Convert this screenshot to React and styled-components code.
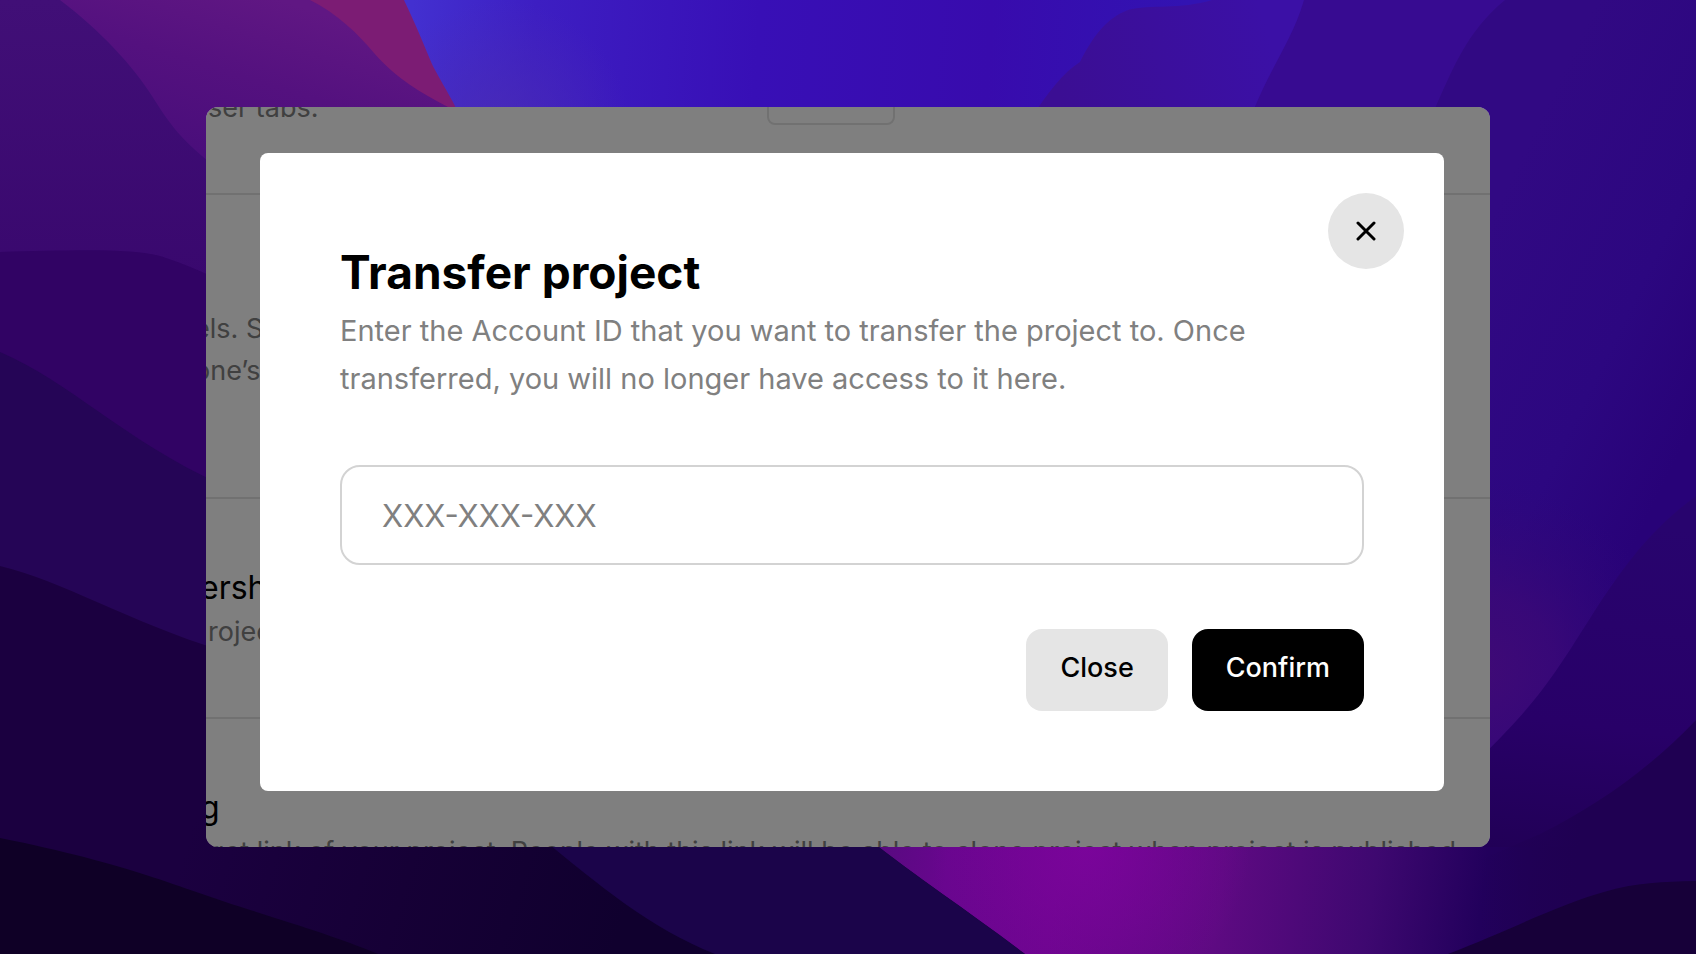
import React from "react";
import styled, { createGlobalStyle } from "styled-components";

const GlobalStyle = createGlobalStyle`
  *, *::before, *::after { box-sizing: border-box; }
  body {
    margin: 0;
    font-family: Inter, "Liberation Sans", sans-serif;
    color: #000;
    background: #1a0040;
  }
`;

const Stage = styled.main`
  position: relative;
  display: flex;
  flex-direction: column;
  justify-content: center;
  min-height: 100vh;
  padding: 64px 206px;
  overflow: hidden;
`;

const WallpaperArt = styled.svg`
  position: absolute;
  inset: 0;
  width: 100%;
  height: 100%;
`;

const Window = styled.div`
  position: relative;
  border-radius: 12px;
  background: #fff;
  overflow: hidden;
`;

/* Settings page, scrolled part way out of the window behind the dialog. */
const SettingsPage = styled.div`
  position: absolute;
  inset: -20px 0 0 -12px;
`;

const Section = styled.section`
  display: grid;
  grid-template-columns: 573px 128px;
  align-content: start;
  height: ${(p) => p.$height}px;
  padding-top: ${(p) => p.$top || 0}px;
  border-bottom: 2px solid #e3e3e3;
  white-space: nowrap;
`;

const SectionTitle = styled.h2`
  grid-column: 1 / -1;
  margin: 0;
  padding-left: 6px;
  font-size: 32px;
  font-weight: 400;
  line-height: 46px;
`;

const SectionText = styled.p`
  margin: 0;
  padding-left: ${(p) => (p.$indent ? 14 : 0)}px;
  font-size: 27px;
  line-height: 42px;
  color: #808080;
`;

const OutlineBox = styled.div`
  height: 38px;
  border: 2px solid #e3e3e3;
  border-radius: 8px;
`;

const Overlay = styled.div`
  position: relative;
  padding: 46px 46px 56px 54px;
  background: rgba(0, 0, 0, 0.5);
`;

const Dialog = styled.form`
  position: relative;
  display: flex;
  flex-direction: column;
  padding: 91px 80px 80px;
  border-radius: 8px;
  background: #fff;
`;

const DialogTitle = styled.h1`
  margin: 0;
  font-size: 46px;
  font-weight: 700;
  line-height: 56px;
`;

const DialogText = styled.p`
  margin: 7px 0 62px;
  max-width: 960px;
  font-size: 29px;
  line-height: 48px;
  color: #808080;
`;

const AccountInput = styled.input`
  width: 100%;
  height: 100px;
  padding: 0 40px;
  border: 2px solid #d3d3d3;
  border-radius: 20px;
  background: #fff;
  font: inherit;
  font-size: 31px;
  color: #000;
  outline: none;

  &::placeholder {
    color: #808080;
    opacity: 1;
  }
`;

const Actions = styled.div`
  display: flex;
  justify-content: flex-end;
  gap: 24px;
  margin-top: 64px;
`;

const Button = styled.button`
  height: 82px;
  padding: 0 34px 6px;
  border: 0;
  border-radius: 16px;
  background: ${(p) => (p.$primary ? "#000" : "#e5e5e5")};
  color: ${(p) => (p.$primary ? "#fff" : "#000")};
  font: inherit;
  font-size: 27px;
  font-weight: 500;
  cursor: pointer;
`;

const IconButton = styled.button`
  position: absolute;
  top: 40px;
  right: 40px;
  display: grid;
  place-items: center;
  width: 76px;
  height: 76px;
  padding: 0;
  border: 0;
  border-radius: 50%;
  background: #e5e5e5;
  color: #000;
  cursor: pointer;
`;

function Wallpaper() {
  return (
    <WallpaperArt viewBox="0 0 1696 954" preserveAspectRatio="none" aria-hidden="true">
      <defs>
        <linearGradient id="violet" x1="0" y1="0" x2="0" y2=".3">
          <stop offset="0" stopColor="#410f77" />
          <stop offset="1" stopColor="#39086e" />
        </linearGradient>
        <linearGradient id="plum" gradientUnits="userSpaceOnUse" x1="280" y1="0" x2="230" y2="160">
          <stop offset="0" stopColor="#601783" />
          <stop offset=".5" stopColor="#54117f" />
          <stop offset="1" stopColor="#4a0e7b" />
        </linearGradient>
        <linearGradient id="blue" gradientUnits="userSpaceOnUse" x1="410" y1="40" x2="1180" y2="90">
          <stop offset="0" stopColor="#4330d0" />
          <stop offset=".16" stopColor="#3d1ec2" />
          <stop offset=".45" stopColor="#380fb6" />
          <stop offset=".75" stopColor="#380bad" />
          <stop offset="1" stopColor="#3213b2" />
        </linearGradient>
        <radialGradient id="blueHaze" gradientUnits="userSpaceOnUse" cx="500" cy="130" r="130">
          <stop offset="0" stopColor="#4a2cb4" stopOpacity=".8" />
          <stop offset="1" stopColor="#4a2cb4" stopOpacity="0" />
        </radialGradient>
        <linearGradient id="indigo" gradientUnits="userSpaceOnUse" x1="1060" y1="100" x2="1270" y2="40">
          <stop offset="0" stopColor="#3b0e93" />
          <stop offset="1" stopColor="#3b10a6" />
        </linearGradient>
        <linearGradient id="right" gradientUnits="userSpaceOnUse" x1="1450" y1="300" x2="1696" y2="420">
          <stop offset="0" stopColor="#310983" />
          <stop offset=".6" stopColor="#2c0780" />
          <stop offset="1" stopColor="#280278" />
        </linearGradient>
        <radialGradient id="rightGlow" gradientUnits="userSpaceOnUse" cx="1480" cy="670" r="190">
          <stop offset="0" stopColor="#3f0a76" />
          <stop offset=".4" stopColor="#3b0977" stopOpacity=".8" />
          <stop offset="1" stopColor="#300878" stopOpacity="0" />
        </radialGradient>
        <linearGradient id="deep" gradientUnits="userSpaceOnUse" x1="1600" y1="520" x2="1560" y2="860">
          <stop offset="0" stopColor="#28046e" />
          <stop offset=".6" stopColor="#280068" />
          <stop offset="1" stopColor="#210056" />
        </linearGradient>
        <linearGradient id="dusk" gradientUnits="userSpaceOnUse" x1="1480" y1="0" x2="1580" y2="0">
          <stop offset="0" stopColor="#1f0052" stopOpacity="0" />
          <stop offset="1" stopColor="#1f0052" />
        </linearGradient>
        <linearGradient id="orchid" gradientUnits="userSpaceOnUse" x1="880" y1="850" x2="1560" y2="940">
          <stop offset="0" stopColor="#580a80" />
          <stop offset=".1" stopColor="#68068e" />
          <stop offset=".26" stopColor="#6c058e" />
          <stop offset=".5" stopColor="#5e0a82" />
          <stop offset=".72" stopColor="#3e0870" />
          <stop offset=".88" stopColor="#22005c" />
          <stop offset="1" stopColor="#200054" />
        </linearGradient>
        <radialGradient id="orchidGlow" gradientUnits="userSpaceOnUse" cx="1090" cy="845" r="160">
          <stop offset="0" stopColor="#7e049e" stopOpacity=".8" />
          <stop offset="1" stopColor="#7e049e" stopOpacity="0" />
        </radialGradient>
        <linearGradient id="night" gradientUnits="userSpaceOnUse" x1="200" y1="800" x2="620" y2="930">
          <stop offset="0" stopColor="#1b0040" />
          <stop offset=".5" stopColor="#160036" />
          <stop offset="1" stopColor="#10002e" />
        </linearGradient>
      </defs>
      <rect width="860" height="954" fill="url(#violet)" />
      <path d="M60 0C100 30 133 66 152 96C172 128 184 144 230 178H480V0Z" fill="url(#plum)" />
      <path d="M310 0C338 14 358 34 374 53C398 80 420 92 448 107H470V0Z" fill="#7c1c74" />
      <path d="M404 0C416 25 424 45 432 64C442 84 450 94 462 120H1320V0Z" fill="url(#blue)" />
      <path d="M404 0C416 25 424 45 432 64C442 84 450 94 462 120H1320V0Z" fill="url(#blueHaze)" />
      <path d="M1030 120C1048 92 1064 72 1080 62C1092 38 1106 18 1128 10C1150 4 1180 10 1212 0H1400V120Z" fill="url(#indigo)" />
      <path d="M1304 0C1292 42 1268 70 1250 120H1520V0Z" fill="#370b91" />
      <path d="M1505 0C1466 32 1452 70 1430 120V954H1696V0Z" fill="url(#right)" />
      <path d="M1430 400H1696V954H1430Z" fill="url(#rightGlow)" />
      <path d="M1696 496C1650 530 1624 566 1594 612C1556 672 1540 700 1480 758V954H1696Z" fill="url(#deep)" />
      <path d="M866 837C920 880 970 912 1025 954H1600V847H1440Z" fill="url(#orchid)" />
      <path d="M866 837C920 880 970 912 1025 954H1300V837Z" fill="url(#orchidGlow)" />
      <path d="M1696 720C1650 768 1600 804 1540 834L1480 860V954H1696Z" fill="url(#dusk)" />
      <path d="M0 252C80 250 140 248 166 258C184 264 198 270 220 280V954H0Z" fill="#310364" />
      <path d="M0 352C70 382 124 440 220 484V954H0Z" fill="#250556" />
      <path d="M0 566C60 580 130 622 220 650V800H800V954H0Z" fill="url(#night)" />
      <path d="M0 838C130 864 180 888 244 908C300 926 340 938 378 954H0Z" fill="#0f0026" />
      <path d="M540 837C600 886 650 928 715 954H1025C970 912 920 880 866 837Z" fill="#1b044a" />
      <path d="M1448 954C1510 930 1560 904 1604 892C1636 882 1664 882 1696 881V954Z" fill="#170039" />
    </WallpaperArt>
  );
}

function CloseIcon() {
  return (
    <svg width="20" height="20" viewBox="0 0 20 20" fill="none" stroke="currentColor" strokeWidth="3" strokeLinecap="round" aria-hidden="true">
      <path d="M2 2L18 18M18 2L2 18" />
    </svg>
  );
}

export default function App() {
  return (
    <>
      <GlobalStyle />
      <Stage>
        <Wallpaper />
        <Window>
          <SettingsPage aria-hidden="true">
            <Section $height={108}>
              <SectionText $indent>ser tabs.</SectionText>
              <OutlineBox />
            </Section>
            <Section $height={304} $top={113}>
              <SectionText>
                els. S<br />
                one’s
              </SectionText>
            </Section>
            <Section $height={220} $top={66}>
              <SectionTitle>ersh</SectionTitle>
              <SectionText $indent>rojec</SectionText>
            </Section>
            <Section $height={160} $top={66}>
              <SectionTitle>g</SectionTitle>
              <SectionText $indent>
                get link of your project. People with this link will be able to clone project when project is published.
              </SectionText>
            </Section>
          </SettingsPage>
          <Overlay>
            <Dialog role="dialog" aria-labelledby="dialog-title" aria-describedby="dialog-text" onSubmit={(e) => e.preventDefault()}>
              <DialogTitle id="dialog-title">Transfer project</DialogTitle>
              <DialogText id="dialog-text">
                Enter the Account ID that you want to transfer the project to. Once transferred, you will no longer have access to it here.
              </DialogText>
              <AccountInput type="text" aria-label="Account ID" placeholder="XXX-XXX-XXX" />
              <Actions>
                <Button type="button">Close</Button>
                <Button type="submit" $primary>Confirm</Button>
              </Actions>
              <IconButton type="button" aria-label="Close dialog">
                <CloseIcon />
              </IconButton>
            </Dialog>
          </Overlay>
        </Window>
      </Stage>
    </>
  );
}
